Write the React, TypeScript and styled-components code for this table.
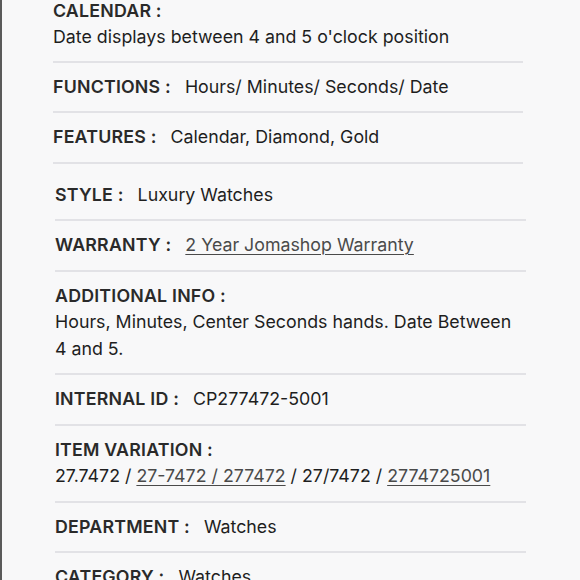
import React from "react";
import styled, { createGlobalStyle } from "styled-components";

const Global = createGlobalStyle`
  html, body { margin: 0; padding: 0; background: #f8f8f9; }
  body { font-family: Inter, "Liberation Sans", Arial, sans-serif; }
`;

const Page = styled.div`
  width: 580px;
  height: 580px;
  overflow: hidden;
  box-sizing: border-box;
  border-left: 2px solid #5a5a5a;
  background: #f8f8f9;
`;

const Group = styled.div<{ $left: number; $width: number; $top?: number; $lh: number }>`
  width: ${(p) => p.$width}px;
  margin: ${(p) => p.$top ?? 0}px 0 0 ${(p) => p.$left}px;
  display: flex;
  flex-direction: column;
  line-height: ${(p) => p.$lh}px;
`;

const Row = styled.div<{ $extraTop?: number; $extraBottom?: number }>`
  padding: ${(p) => 11 + (p.$extraTop ?? 0)}px 0 ${(p) => 11 + (p.$extraBottom ?? 0)}px;
  border-bottom: 2px solid #e2e2e6;
  font-size: 17.8px;
  color: #222;
`;

const Label = styled.span<{ $block?: boolean }>`
  font-weight: 600;
  color: #2a2a2a;
  letter-spacing: 0.2px;
  margin-right: 14px;
  display: ${(p) => (p.$block ? "block" : "inline")};
`;

const Value = styled.span`
  color: #1e1e1e;
`;

const Link = styled.a`
  color: #4a4a4a;
  text-decoration: underline;
  text-underline-offset: 3px;
  text-decoration-thickness: 1px;
`;

export default function App() {
  return (
    <>
      <Global />
      <Page>
        <Group $left={51} $width={470} $top={-13} $lh={26}>
          <Row>
            <Label $block>CALENDAR :</Label>
            <Value>Date displays between 4 and 5 o'clock position</Value>
          </Row>
          <Row>
            <Label>FUNCTIONS :</Label>
            <Value>Hours/ Minutes/ Seconds/ Date</Value>
          </Row>
          <Row $extraBottom={1}>
            <Label>FEATURES :</Label>
            <Value>Calendar, Diamond, Gold</Value>
          </Row>
        </Group>
        <Group $left={53} $width={471} $lh={26.5}>
          <Row $extraTop={7} $extraBottom={-0.5}>
            <Label>STYLE :</Label>
            <Value>Luxury Watches</Value>
          </Row>
          <Row>
            <Label>WARRANTY :</Label>
            <Link>2 Year Jomashop Warranty</Link>
          </Row>
          <Row>
            <Label $block>ADDITIONAL INFO :</Label>
            <Value>Hours, Minutes, Center Seconds hands. Date Between 4 and 5.</Value>
          </Row>
          <Row>
            <Label>INTERNAL ID :</Label>
            <Value>CP277472-5001</Value>
          </Row>
          <Row>
            <Label $block>ITEM VARIATION :</Label>
            <Value>
              27.7472 / <Link>27-7472 / 277472</Link> / 27/7472 / <Link>2774725001</Link>
            </Value>
          </Row>
          <Row>
            <Label>DEPARTMENT :</Label>
            <Value>Watches</Value>
          </Row>
          <Row>
            <Label>CATEGORY :</Label>
            <Value>Watches</Value>
          </Row>
        </Group>
      </Page>
    </>
  );
}
